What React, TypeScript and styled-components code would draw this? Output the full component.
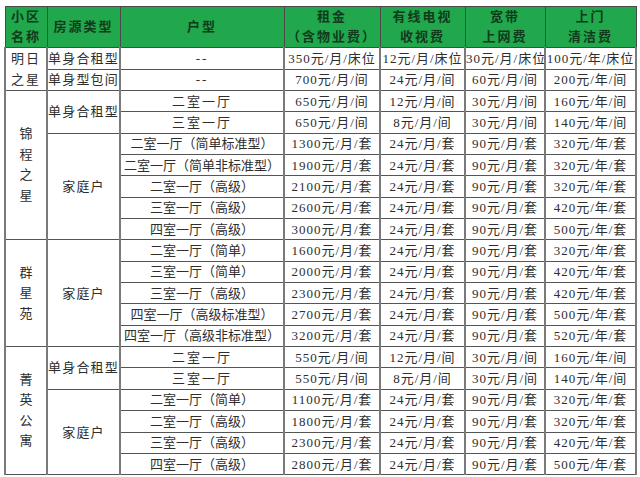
import React from 'react';
import styled, { createGlobalStyle } from 'styled-components';

type Row = {
  type?: { label: string, span: number },
  layout: string,
  rent: string,
  tv: string,
  net: string,
  clean: string
};

interface Estate {
  name: string[],
  vertical: boolean,
  rows: Row[]
}

const fam = (
  layout: string, rent: number, clean: number
): Row => ({
  layout,
  rent: `${rent}元/月/套`,
  tv: '24元/月/套',
  net: '90元/月/套',
  clean: `${clean}元/年/套`
});

const estates: Estate[] = [
  {
    name: ['明日', '之星'],
    vertical: false,
    rows: [
      {
        type: { label: '单身合租型', span: 1 },
        layout: '--',
        rent: '350元/月/床位',
        tv: '12元/月/床位',
        net: '30元/月/床位',
        clean: '100元/年/床位'
      },
      {
        type: { label: '单身型包间', span: 1 },
        layout: '--',
        rent: '700元/月/间',
        tv: '24元/月/间',
        net: '60元/月/间',
        clean: '200元/年/间'
      }
    ]
  },
  {
    name: ['锦', '程', '之', '星'],
    vertical: true,
    rows: [
      {
        type: { label: '单身合租型', span: 2 },
        layout: '二室一厅',
        rent: '650元/月/间',
        tv: '12元/月/间',
        net: '30元/月/间',
        clean: '160元/年/间'
      },
      {
        layout: '三室一厅',
        rent: '650元/月/间',
        tv: '8元/月/间',
        net: '30元/月/间',
        clean: '140元/年/间'
      },
      { ...fam('二室一厅（简单标准型）', 1300, 320), type: { label: '家庭户', span: 5 } },
      fam('二室一厅（简单非标准型）', 1900, 320),
      fam('二室一厅（高级）', 2100, 320),
      fam('三室一厅（高级）', 2600, 420),
      fam('四室一厅（高级）', 3000, 500)
    ]
  },
  {
    name: ['群', '星', '苑'],
    vertical: true,
    rows: [
      { ...fam('二室一厅（简单）', 1600, 320), type: { label: '家庭户', span: 5 } },
      fam('三室一厅（简单）', 2000, 420),
      fam('三室一厅（高级）', 2300, 420),
      fam('四室一厅（高级标准型）', 2700, 500),
      fam('四室一厅（高级非标准型）', 3200, 520)
    ]
  },
  {
    name: ['菁', '英', '公', '寓'],
    vertical: true,
    rows: [
      {
        type: { label: '单身合租型', span: 2 },
        layout: '二室一厅',
        rent: '550元/月/间',
        tv: '12元/月/间',
        net: '30元/月/间',
        clean: '160元/年/间'
      },
      {
        layout: '三室一厅',
        rent: '550元/月/间',
        tv: '8元/月/间',
        net: '30元/月/间',
        clean: '140元/年/间'
      },
      { ...fam('二室一厅（简单）', 1100, 320), type: { label: '家庭户', span: 4 } },
      fam('二室一厅（高级）', 1800, 320),
      fam('三室一厅（高级）', 2300, 420),
      fam('四室一厅（高级）', 2800, 500)
    ]
  }
];

const widths = [42, 73, 164, 96, 85, 80, 91];

const headers = [
  ['小区', '名称'],
  ['房源类型'],
  ['户型'],
  ['租金', '（含物业费）'],
  ['有线电视', '收视费'],
  ['宽带', '上网费'],
  ['上门', '清洁费']
];

const App: React.FC = () => (
  <>
    <GlobalStyle />
    <Page>
      <Table>
        <colgroup>
          {widths.map((w, i) => <col key={i} style={{ width: w }} />)}
        </colgroup>
        <thead>
          <tr>
            {headers.map((lines, i) => (
              <HeadCell key={i}>
                {lines.map((l) => <Line key={l}>{l}</Line>)}
              </HeadCell>
            ))}
          </tr>
        </thead>
        <tbody>
          {estates.map((estate) => estate.rows.map((row, i) => (
            <BodyRow key={`${estate.name.join('')}-${i}`}>
              {i === 0 && (
                <NameCell rowSpan={estate.rows.length}>
                  {estate.name.map((ch, k) => (
                    <NameLine key={k} $vertical={estate.vertical}>{ch}</NameLine>
                  ))}
                </NameCell>
              )}
              {row.type && (
                <TypeCell rowSpan={row.type.span}>
                  {row.type.label}
                </TypeCell>
              )}
              <LayoutCell $short={row.layout.length <= 4}>{row.layout}</LayoutCell>
              <Cell>{row.rent}</Cell>
              <Cell>{row.tv}</Cell>
              <Cell>{row.net}</Cell>
              <Cell>{row.clean}</Cell>
            </BodyRow>
          )))}
        </tbody>
      </Table>
    </Page>
  </>
);

const GlobalStyle = createGlobalStyle`
  body {
    margin: 0;
    background: #ffffff;
    font-family: "Liberation Serif", "Noto Sans CJK SC", serif;
  }
`;

const Page = styled.div`
  padding: 6px 0 0 4px;
`;

const Table = styled.table`
  width: 631px;
  table-layout: fixed;
  border-collapse: collapse;
  border: 1px solid #555;
  color: #2e2e2e;
`;

const HeadCell = styled.th`
  height: 40px;
  padding: 0;
  background: #21a74c;
  border: 1px solid #4a4a4a;
  color: #123a1d;
  font-size: 13px;
  font-weight: 700;
  letter-spacing: 2px;
  text-align: center;
  vertical-align: middle;
  line-height: 20px;
`;

const Line = styled.div`
  white-space: nowrap;
`;

const BodyRow = styled.tr`
  height: 21.35px;
`;

const Cell = styled.td`
  padding: 0;
  border: 1px solid #555;
  border-left-width: 2px;
  border-right-width: 2px;
  border-left-color: #7a7a7a;
  border-right-color: #7a7a7a;
  font-size: 13px;
  letter-spacing: 1px;
  line-height: 19px;
  text-align: center;
  vertical-align: middle;
  white-space: nowrap;
  overflow: hidden;
`;

const LayoutCell = styled(Cell)<{ $short: boolean }>`
  letter-spacing: ${({ $short }) => ($short ? '2px' : '0')};
`;

const NameCell = styled(Cell)`
  letter-spacing: 0;
`;

const NameLine = styled.div<{ $vertical: boolean }>`
  line-height: ${({ $vertical }) => ($vertical ? '20.5px' : '21px')};
  letter-spacing: ${({ $vertical }) => ($vertical ? '0' : '2px')};
`;

const TypeCell = styled(Cell)`
  letter-spacing: 1.2px;
`;

export default App;
